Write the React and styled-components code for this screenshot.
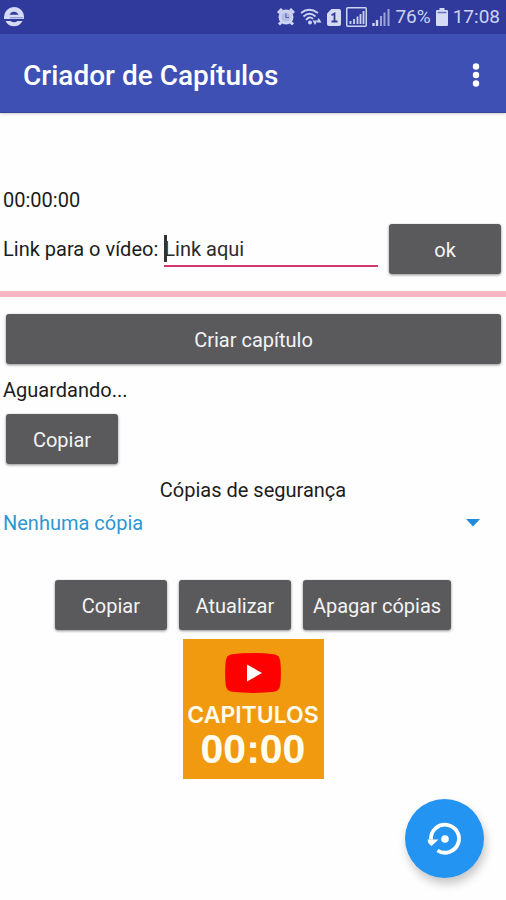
import React, { useState } from "react";
import styled, { createGlobalStyle } from "styled-components";

const App = () => {
  const [link, setLink] = useState("");
  const [backup, setBackup] = useState("");

  const onSubmitHandler = (event) => {
    event.preventDefault();
  };

  return (
    <>
      <GlobalStyle />
      <StPage>
        <StStatusBar>
          <BrowserIcon />
          <StStatusGroup>
            <AlarmIcon />
            <WifiIcon />
            <SimIcon />
            <BoxedSignalIcon />
            <SignalIcon />
            <span>76%</span>
            <BatteryIcon />
            <span>17:08</span>
          </StStatusGroup>
        </StStatusBar>
        <StAppBar>
          <StTitle>Criador de Capítulos</StTitle>
          <StMenuButton type="button" aria-label="Mais opções">
            <svg width="8" height="24" viewBox="0 0 8 24" fill="#fff">
              <circle cx="4" cy="3.5" r="3.2" />
              <circle cx="4" cy="12" r="3.2" />
              <circle cx="4" cy="20.5" r="3.2" />
            </svg>
          </StMenuButton>
        </StAppBar>

        <StMain>
          <StText>00:00:00</StText>
          <StLinkForm onSubmit={onSubmitHandler}>
            <label htmlFor="link">Link para o vídeo:</label>
            <StField>
              <StInput
                id="link"
                type="text"
                placeholder="Link aqui"
                value={link}
                onChange={(e) => setLink(e.target.value)}
              />
            </StField>
            <StButton>ok</StButton>
          </StLinkForm>
          <StDivider />
          <StRow>
            <StButton type="button" $full>
              Criar capítulo
            </StButton>
          </StRow>
          <StStatusText>Aguardando...</StStatusText>
          <StRow>
            <StButton type="button">Copiar</StButton>
          </StRow>

          <StBackupLabel htmlFor="backup">Cópias de segurança</StBackupLabel>
          <StSelectBox>
            <StSelect
              id="backup"
              value={backup}
              onChange={(e) => setBackup(e.target.value)}
            >
              <option value="">Nenhuma cópia</option>
            </StSelect>
            <StArrow width="14" height="8" viewBox="0 0 14 8">
              <path d="M0 0h14L7 7.5z" fill="#2389dc" />
            </StArrow>
          </StSelectBox>
          <StActions>
            <StButton type="button">Copiar</StButton>
            <StButton type="button">Atualizar</StButton>
            <StButton type="button">Apagar cópias</StButton>
          </StActions>

          <StLogo>
            <svg width="57" height="40" viewBox="0 0 57 40">
              <path
                d="M7 1.2Q28-1 49 1.2Q54.500 2 55.300 8Q56.500 20 55.300 32Q54.500 38 49 38.800Q28 41 7 38.800Q1.500 38 .7 32Q-.5 20 .7 8Q1.500 2 7 1.200z"
                fill="#fe0000"
              />
              <path d="M22 11.500v17L37 20z" fill="#fff" />
            </svg>
            <StLogoName>CAPITULOS</StLogoName>
            <StLogoTime>00:00</StLogoTime>
          </StLogo>
        </StMain>

        <StFab type="button" aria-label="Restaurar cópia">
          <svg width="36" height="36" viewBox="0 0 36 36" fill="none">
            <path
              d="M4 18.500A14 14 0 1 1 10.500 29.500"
              stroke="#fff"
              strokeWidth="3.800"
            />
            <path d="M.5 18.500h11L4.500 25Q1 23 .5 18.500z" fill="#fff" />
            <circle cx="18" cy="18" r="3.800" fill="#fff" />
          </svg>
        </StFab>
      </StPage>
    </>
  );
};

export default App;

const BrowserIcon = () => (
  <svg width="20" height="20" viewBox="0 0 20 20">
    <path
      d="M10 0a10 10 0 0 1 10 10.500V12H0v-2A10 10 0 0 1 10 0z"
      fill="#d5daf5"
    />
    <path d="M5.500 7.800Q7 4.800 10 4.800T14.500 7.800z" fill="#323c9c" />
    <path
      d="M2 14h4.500q3.500 2.500 7 0H18.500a9.500 9.500 0 0 1-17 0z"
      fill="#d5daf5"
    />
    <path d="M6 10.800h13.500" stroke="#7f88cb" fill="none" />
  </svg>
);

const AlarmIcon = () => (
  <svg width="18" height="18" viewBox="0 0 18 18">
    <g stroke="#cdd3f2" strokeWidth="3">
      <path d="M1 5l4-4M13 1l4 4M2 16.500l3-3M16 16.500l-3-3" />
    </g>
    <circle cx="9" cy="9" r="7.500" fill="#cdd3f2" />
    <circle cx="9" cy="9" r="4.500" fill="#b3bae4" />
    <path d="M9 5.500v4h3" stroke="#5a63b4" strokeWidth="1.200" fill="none" />
  </svg>
);

const WifiIcon = () => (
  <svg width="22" height="18" viewBox="0 0 22 18" fill="none">
    <g stroke="#cdd3f2" strokeWidth="1.800">
      <path d="M1 5Q9-1.500 18 5" />
      <path d="M3.500 8.500Q9.500 3 15.500 8.500" />
      <path d="M6 12Q9.500 7.500 13 11" />
    </g>
    <circle cx="10" cy="14.500" r="2" fill="#cdd3f2" />
    <path d="M12.500 12.500h5l-2.500 4.500zM16 14.500h5.500L18.700 10z" fill="#cdd3f2" />
  </svg>
);

const SimIcon = () => (
  <svg width="14" height="17" viewBox="0 0 14 17">
    <path d="M4.500 0H12q2 0 2 2v13q0 2-2 2H2q-2 0-2-2V4.500z" fill="#d5daf5" />
    <path
      d="M4.500 6.200L7.500 4.500V12M4.500 12.500h6"
      stroke="#323c9c"
      strokeWidth="1.800"
      fill="none"
    />
  </svg>
);

const BoxedSignalIcon = () => (
  <svg width="21" height="20" viewBox="0 0 21 20" fill="none">
    <rect x=".75" y=".75" width="19.500" height="18.500" rx="1" stroke="#cdd3f2" strokeWidth="1.500" />
    <path
      d="M4.500 17v-3M8 17v-5M11.500 17V9.500M14.500 17V7M17.500 17V4"
      stroke="#cdd3f2"
      strokeWidth="1.800"
    />
  </svg>
);

const SignalIcon = () => (
  <svg width="18" height="18" viewBox="0 0 18 18" fill="none">
    <path d="M1.500 18v-3M5 18v-6" stroke="#cdd3f2" strokeWidth="2.400" />
    <path
      d="M9 18V8M12.500 18V4.500M16.500 18V1"
      stroke="#9ba3dc"
      strokeWidth="2"
    />
  </svg>
);

const BatteryIcon = () => (
  <svg width="12" height="18" viewBox="0 0 12 18">
    <path d="M3.500 0h5v2H11q1 0 1 1v14q0 1-1 1H1q-1 0-1-1V3q0-1 1-1h2.500z" fill="#d5daf5" />
    <path d="M1.500 4.500h9" stroke="#6a73bd" strokeWidth="1.500" />
  </svg>
);

const GlobalStyle = createGlobalStyle`
  * {
    box-sizing: border-box;
  }

  body {
    margin: 0;
    background-color: #fefefe;
  }

  body,
  button,
  input,
  select {
    font-family: Roboto, "Liberation Sans", sans-serif;
    font-size: 20px;
    line-height: 24px;
    color: #1c1c1c;
  }
`;

const StPage = styled.div`
  display: flex;
  flex-direction: column;
  min-height: 100vh;
`;

const StStatusBar = styled.div`
  display: flex;
  align-items: center;
  justify-content: space-between;
  height: 34px;
  padding: 0 6px 0 4px;
  background-color: #303a9d;
  font-size: 19px;
  color: #cdd3f2;
`;

const StStatusGroup = styled.div`
  display: flex;
  align-items: center;
  gap: 5px;
`;

const StAppBar = styled.header`
  display: flex;
  align-items: center;
  justify-content: space-between;
  height: 79px;
  padding: 5px 22px 0 23px;
  background-color: #3e50b4;
  border-bottom: 1px solid #33439b;
  box-shadow: 0 1px 3px rgba(0, 0, 0, 0.2);
`;

const StTitle = styled.h1`
  margin: 0;
  font-size: 28px;
  line-height: 32px;
  font-weight: 500;
  color: #fff;
`;

const StMenuButton = styled.button`
  display: flex;
  padding: 0 4px 2px;
  border: none;
  background: none;
  cursor: pointer;
`;

const StMain = styled.main`
  display: flex;
  flex-direction: column;
  padding-top: 75px;
`;

const StText = styled.p`
  margin: 0;
  padding: 0 3px;
`;

const StStatusText = styled(StText)`
  margin: 14px 0 12px;
`;

const StLinkForm = styled.form`
  display: flex;
  align-items: center;
  padding: 12px 5px 17px 3px;
`;

const StField = styled.div`
  position: relative;
  flex: 1;
  min-width: 0;
  margin: 0 11px 0 6px;

  /* text cursor */
  &::before {
    content: "";
    position: absolute;
    left: 0;
    top: 4px;
    width: 3px;
    height: 27px;
    background-color: #333;
  }
`;

const StInput = styled.input`
  display: block;
  width: 100%;
  height: 36px;
  padding: 2px 0 0;
  border: none;
  border-bottom: 2px solid #d0386f;
  outline: none;
  background: none;

  &::placeholder {
    color: #2c2c2c;
    opacity: 1;
  }
`;

const StButton = styled.button`
  width: ${(props) => (props.$full ? "100%" : "auto")};
  min-width: 112px;
  height: 50px;
  padding: 2px 10px 0;
  border: none;
  border-radius: 3px;
  background-color: #5a5a5c;
  box-shadow: 0 1px 3px rgba(0, 0, 0, 0.45);
  color: #f4f4f4;
  cursor: pointer;
`;

const StDivider = styled.hr`
  width: 100%;
  height: 6px;
  margin: 0 0 17px;
  border: none;
  background-color: #f5b5c3;
`;

const StRow = styled.div`
  display: flex;
  padding: 0 5px 0 6px;
`;

const StBackupLabel = styled.label`
  margin-top: 14px;
  text-align: center;
`;

const StSelectBox = styled.div`
  position: relative;
  margin-bottom: 36px;
`;

const StSelect = styled.select`
  display: block;
  width: 100%;
  height: 42px;
  padding: 0 40px 0 3px;
  border: none;
  outline: none;
  appearance: none;
  background: none;
  color: #2f96d4;
`;

const StArrow = styled.svg`
  position: absolute;
  right: 26px;
  top: 17px;
  pointer-events: none;
`;

const StActions = styled.div`
  display: flex;
  justify-content: center;
  gap: 12px;
`;

const StLogo = styled.div`
  display: flex;
  flex-direction: column;
  align-items: center;
  align-self: center;
  width: 141px;
  height: 140px;
  margin-top: 9px;
  padding-top: 14px;
  background-color: #f1990f;
  color: #fffdf0;
`;

const StLogoName = styled.span`
  margin-top: 8px;
  font-family: Inter, "Liberation Sans", sans-serif;
  font-size: 23px;
  font-weight: 600;
  line-height: 28px;
`;

const StLogoTime = styled.span`
  font-family: "Liberation Sans", Arial, sans-serif;
  font-size: 41px;
  font-weight: 700;
  line-height: 40px;
`;

const StFab = styled.button`
  position: fixed;
  right: 22px;
  bottom: 22px;
  display: flex;
  align-items: center;
  justify-content: center;
  width: 79px;
  height: 79px;
  padding: 0;
  border: none;
  border-radius: 50%;
  background-color: #2494f2;
  box-shadow: 2px 6px 10px rgba(0, 0, 0, 0.22);
  cursor: pointer;
`;
